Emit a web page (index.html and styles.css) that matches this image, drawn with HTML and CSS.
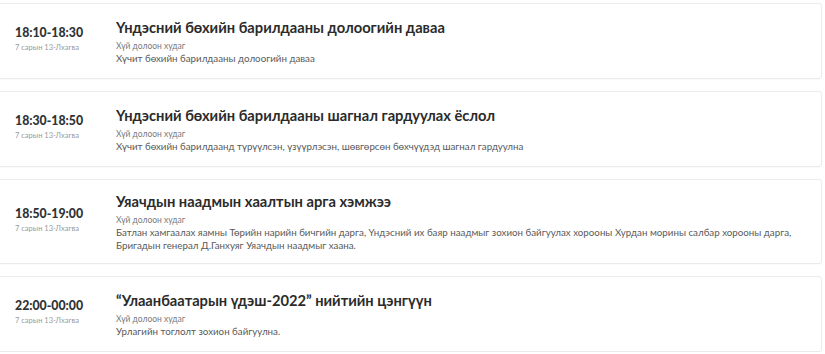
FILE: index.html
```html
<!DOCTYPE html>
<html lang="mn">
<head>
<meta charset="utf-8">
<link rel="stylesheet" href="styles.css">
</head>
<body>
<div class="list">
  <div class="card">
    <div class="when">
      <div class="time">18:10-18:30</div>
      <div class="date">7 сарын 13-Лхагва</div>
    </div>
    <div class="info">
      <div class="title">Үндэсний бөхийн барилдааны долоогийн даваа</div>
      <div class="place">Хүй долоон худаг</div>
      <div class="desc">Хүчит бөхийн барилдааны долоогийн даваа</div>
    </div>
  </div>
  <div class="card">
    <div class="when">
      <div class="time">18:30-18:50</div>
      <div class="date">7 сарын 13-Лхагва</div>
    </div>
    <div class="info">
      <div class="title">Үндэсний бөхийн барилдааны шагнал гардуулах ёслол</div>
      <div class="place">Хүй долоон худаг</div>
      <div class="desc">Хүчит бөхийн барилдаанд түрүүлсэн, үзүүрлэсэн, шөвгөрсөн бөхчүүдэд шагнал гардуулна</div>
    </div>
  </div>
  <div class="card">
    <div class="when">
      <div class="time">18:50-19:00</div>
      <div class="date">7 сарын 13-Лхагва</div>
    </div>
    <div class="info">
      <div class="title">Уяачдын наадмын хаалтын арга хэмжээ</div>
      <div class="place">Хүй долоон худаг</div>
      <div class="desc">Батлан хамгаалах яамны Төрийн нарийн бичгийн дарга, Үндэсний их баяр наадмыг зохион байгуулах хорооны Хурдан морины салбар хорооны дарга, Бригадын генерал Д.Ганхуяг Уяачдын наадмыг хаана.</div>
    </div>
  </div>
  <div class="card">
    <div class="when">
      <div class="time">22:00-00:00</div>
      <div class="date">7 сарын 13-Лхагва</div>
    </div>
    <div class="info">
      <div class="title">“Улаанбаатарын үдэш-2022” нийтийн цэнгүүн</div>
      <div class="place">Хүй долоон худаг</div>
      <div class="desc">Урлагийн тоглолт зохион байгуулна.</div>
    </div>
  </div>
</div>
</body>
</html>
```

FILE: styles.css
```css
html, body {
  margin: 0;
  padding: 0;
  background: #fff;
}
body {
  font-family: Lato, "Noto Sans", sans-serif;
  color: #333;
}
.list {
  display: flex;
  flex-direction: column;
  gap: 12px;
  padding-top: 3px;
  width: 826px;
  margin-left: -4px;
}
.card {
  box-sizing: border-box;
  min-height: 76px;
  display: flex;
  align-items: center;
  border: 1px solid #ebebeb;
  border-radius: 3px;
  padding: 11px 14px 11px 18px;
  box-shadow: 0 1px 1px rgba(0,0,0,0.02);
}
.when {
  width: 101px;
  flex: none;
  margin-top: -3px;
}
.time {
  font-size: 12.3px;
  font-weight: 900;
  line-height: 16px;
  color: #2f3336;
}
.date {
  font-size: 7.5px;
  line-height: 12px;
  margin-top: 1px;
  color: #9a9a9a;
}
.info {
  flex: 1;
}
.title {
  font-size: 14.7px;
  font-weight: 700;
  line-height: 20px;
  color: #2b2b2b;
}
.place {
  font-size: 8.5px;
  line-height: 12px;
  margin-top: 3px;
  color: #7a7a7a;
}
.desc {
  font-size: 9.75px;
  line-height: 13px;
  color: #5a5a5a;
}
```
